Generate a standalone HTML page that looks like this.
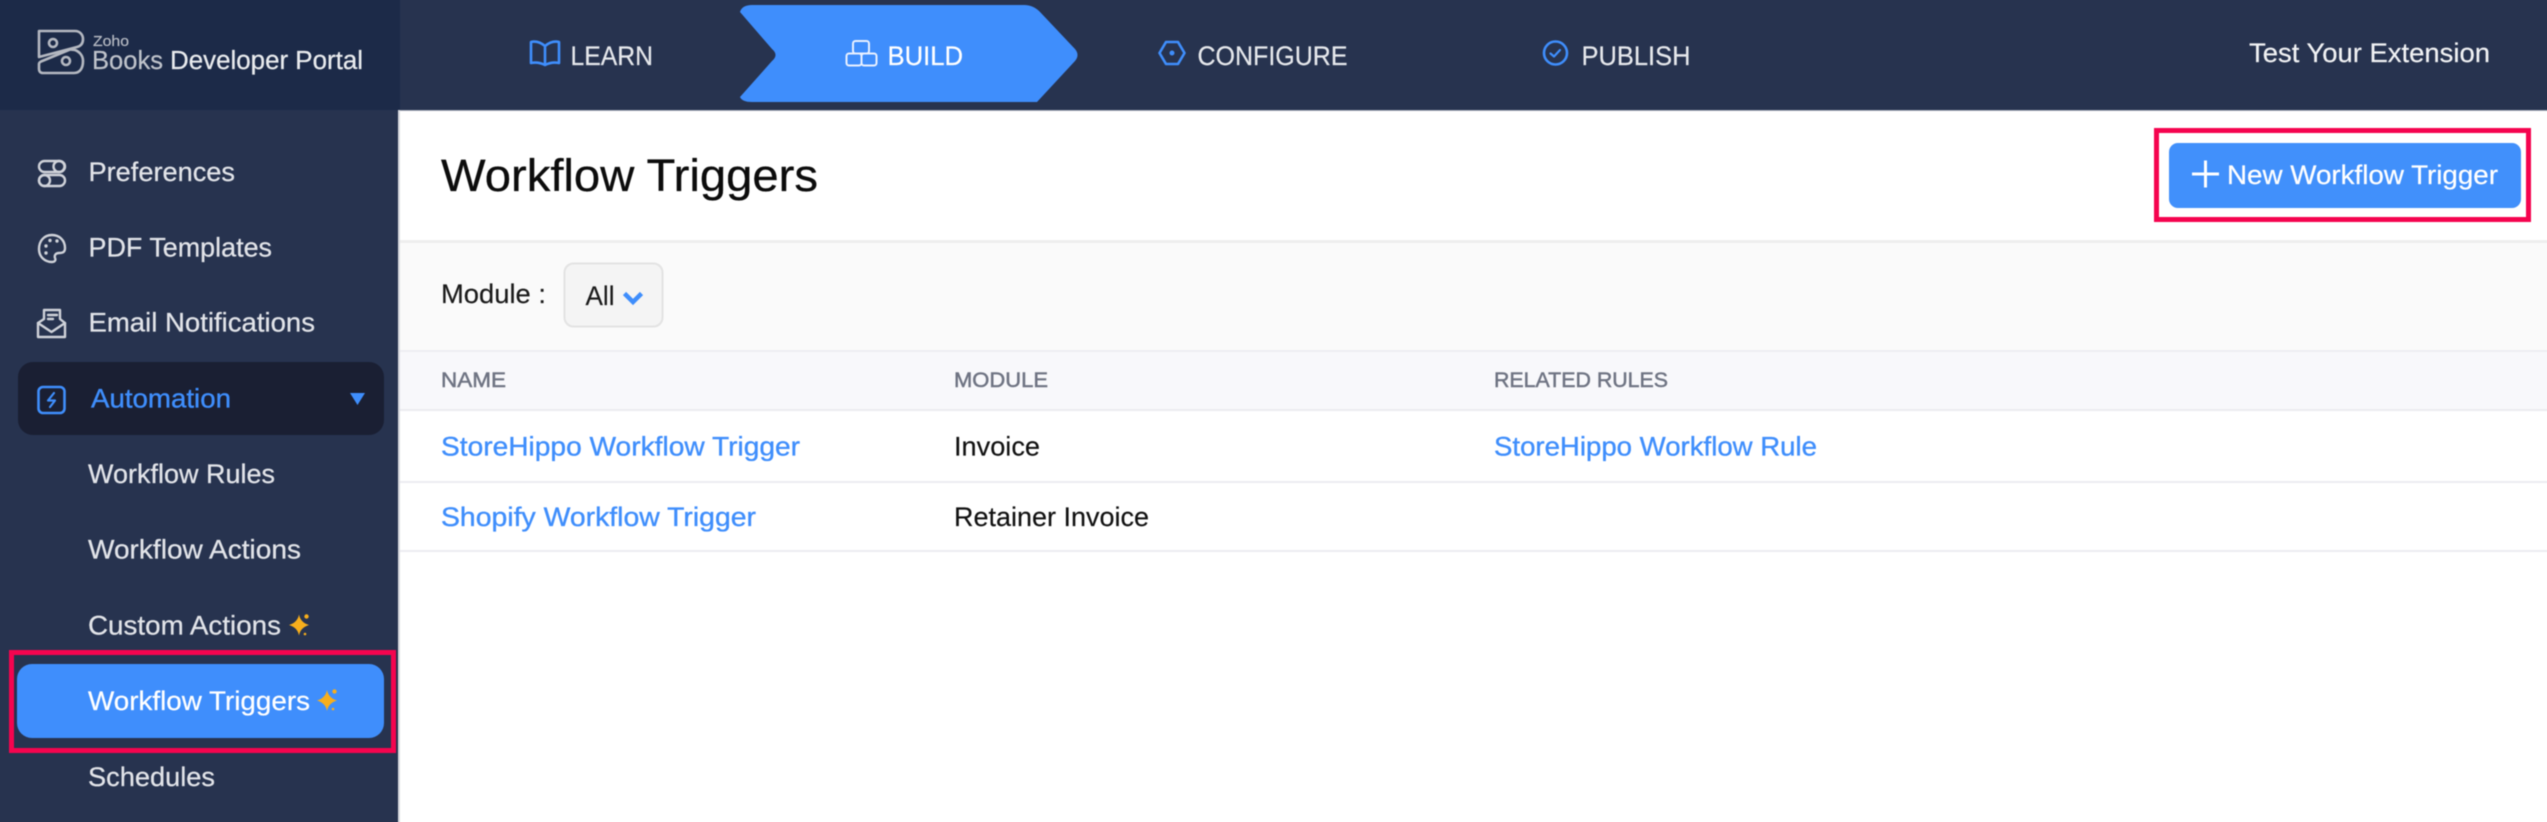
<!DOCTYPE html>
<html lang="en">
<head>
<meta charset="utf-8">
<title>Workflow Triggers</title>
<style>
html,body{margin:0;padding:0;width:2547px;height:822px;overflow:hidden;background:#fff}
.wrap{position:absolute;left:0;top:0;width:2547px;height:822px;overflow:hidden}
svg{display:block;position:absolute;left:-10px;top:-10px;filter:blur(.5px)}
text{font-family:"Liberation Sans",sans-serif;font-size:27px}
.nav{fill:#e6e8ec;stroke:#e6e8ec;stroke-width:.2}
.side{fill:#e2e4e9;stroke:#e2e4e9;stroke-width:.25}
.wt{fill:#fff;stroke:#fff;stroke-width:.25}
.link{fill:#3f8efc;stroke:#3f8efc;stroke-width:.35}
.th{fill:#6f7483;font-size:21.500px;stroke:#6f7483;stroke-width:.5}
.td{fill:#111;stroke:#111;stroke-width:.15}
.g{fill:none;stroke:#cfd2d9;stroke-width:2.4;stroke-linecap:round;stroke-linejoin:round}
.b{fill:none;stroke:#3f8efc;stroke-width:2.6;stroke-linecap:round;stroke-linejoin:round}
.w{fill:none;stroke:#e8f0ff;stroke-width:2;stroke-linejoin:round}
</style>
</head>
<body>
<div class="wrap">
<svg width="2567" height="842" viewBox="-10 -10 2567 842" xmlns="http://www.w3.org/2000/svg">
  <!-- backgrounds -->
  <rect x="-10" y="-10" width="2567" height="842" fill="#fff"/>
  <rect x="-10" y="-10" width="2567" height="120" fill="#27334f"/>
  <rect x="-10" y="-10" width="410" height="120" fill="#1c2a48"/>
  <rect x="-10" y="110" width="408" height="722" fill="#27334f"/>
  <rect x="398" y="110" width="2" height="722" fill="#d9dbe0"/>
  <rect x="400" y="110" width="2157" height="1" fill="#aab0bc"/>

  <!-- logo -->
  <g fill="none" stroke="#b4b8c1" stroke-width="2.600" stroke-linejoin="round">
    <path d="M39 31H75C80 31 83 35 83 39C83 43 81 46 77 47L39 57Z"/>
    <path d="M41 61.500L70 49.500L75 50C80 52 83 56 83 61C83 68 80 73 74 73H43C40 73 39 71 39 69V64C39 63 40 62 41 61.500Z"/>
    <circle cx="53" cy="43" r="4"/>
    <circle cx="66" cy="61" r="4"/>
  </g>
  <text x="93" y="46" fill="#b6bac3" style="font-size:14.500px" stroke="#b6bac3" stroke-width=".2" textLength="36" lengthAdjust="spacingAndGlyphs">Zoho</text>
  <text x="92" y="69" fill="#bfc3cb" stroke="#bfc3cb" stroke-width=".2" style="font-size:26px" textLength="71" lengthAdjust="spacingAndGlyphs">Books</text>
  <text x="170" y="69" fill="#e9ebee" stroke="#e9ebee" stroke-width=".25" style="font-size:25.500px" textLength="193" lengthAdjust="spacingAndGlyphs">Developer Portal</text>

  <!-- top nav -->
  <path d="M752 5H1024Q1034 5 1041 13L1075 49Q1080 55 1075 61L1037 102H752Q742 102 740 97L772 61Q779 55 772 49L740 12Q742 5 752 5Z" fill="#3f8efc"/>

  <g class="b">
    <path d="M545 46C540 42 535 41 531 42V63C536 62 541 63 545 65C549 63 554 62 559 63V42C555 41 550 42 545 46ZM545 46V65"/>
  </g>
  <text class="nav" x="570.500" y="65" textLength="82.500" lengthAdjust="spacingAndGlyphs">LEARN</text>

  <g class="w">
    <rect x="853" y="41" width="16" height="12.500" rx="2.500"/>
    <rect x="846.500" y="53.500" width="15" height="12" rx="2.500"/>
    <rect x="861.500" y="53.500" width="15" height="12" rx="2.500"/>
  </g>
  <text class="wt" x="887.500" y="65" textLength="75.500" lengthAdjust="spacingAndGlyphs">BUILD</text>

  <path class="b" d="M1166 42H1178L1184.500 53L1178 64H1166L1159.500 53Z"/>
  <circle cx="1172" cy="53" r="2.500" fill="#3f8efc"/>
  <text class="nav" x="1197.500" y="65" textLength="150" lengthAdjust="spacingAndGlyphs">CONFIGURE</text>

  <circle class="b" cx="1555.500" cy="53" r="11.500"/>
  <path class="b" style="stroke-width:2.200" d="M1550.500 53.500L1554 56.500L1560 50"/>
  <text class="nav" x="1581.500" y="65" textLength="109" lengthAdjust="spacingAndGlyphs">PUBLISH</text>

  <text class="nav" style="fill:#f1f2f4;stroke:#f1f2f4" x="2249" y="62" textLength="241" lengthAdjust="spacingAndGlyphs">Test Your Extension</text>

  <!-- sidebar -->
  <g class="g">
    <rect x="39" y="161" width="26" height="11" rx="5.500"/>
    <circle cx="59" cy="166.500" r="5.500"/>
    <rect x="39" y="175" width="26" height="11" rx="5.500"/>
    <circle cx="44.500" cy="180.500" r="5.500"/>
  </g>
  <text class="side" x="88.500" y="181" textLength="146.500" lengthAdjust="spacingAndGlyphs">Preferences</text>

  <path class="g" d="M52 235C44 235 39 241 39 249C39 257 45 262 52 262C55 262 56 260 55 258C54 255 56 253 59 253C63 253 65 252 65 248C65 240 59 235 52 235Z"/>
  <g fill="#cfd2d9"><circle cx="46" cy="246" r="1.700"/><circle cx="50" cy="240.500" r="1.700"/><circle cx="57" cy="241" r="1.700"/><circle cx="46" cy="253" r="1.700"/></g>
  <text class="side" x="88.500" y="256.500" textLength="183.500" lengthAdjust="spacingAndGlyphs">PDF Templates</text>

  <g class="g">
    <path d="M38 323V337H65V323L60 319V310H44V319Z"/>
    <path d="M38 323L51.500 332L65 323"/>
    <path d="M48 315H57M48 319H53"/>
  </g>
  <text class="side" x="88.500" y="331.500" textLength="226.500" lengthAdjust="spacingAndGlyphs">Email Notifications</text>

  <rect x="18" y="362" width="366" height="73" rx="15" fill="#1a1f33"/>
  <rect class="b" x="38.500" y="387" width="26" height="26" rx="4.500"/>
  <path class="b" style="stroke-width:2.200" d="M54 393L48 400.500H55L50 407"/>
  <text class="link" x="91" y="407.500" textLength="140" lengthAdjust="spacingAndGlyphs">Automation</text>
  <path d="M350 393H365L357.500 405Z" fill="#3f8efc"/>

  <text class="side" x="88" y="483" textLength="187" lengthAdjust="spacingAndGlyphs">Workflow Rules</text>
  <text class="side" x="88" y="558.500" textLength="213" lengthAdjust="spacingAndGlyphs">Workflow Actions</text>
  <text class="side" x="88" y="634.500" textLength="193" lengthAdjust="spacingAndGlyphs">Custom Actions</text>
  <g fill="#f7ae1c">
    <path d="M299 614.500Q300.500 622.500 309 625Q300.500 627.500 299 635.500Q297.500 627.500 289 625Q297.500 622.500 299 614.500Z"/>
    <circle cx="306.500" cy="616.500" r="2.200"/><circle cx="305" cy="634" r="1.300"/>
  </g>

  <rect x="17" y="664" width="367" height="74" rx="15" fill="#3f8efc"/>
  <rect x="11.500" y="652.500" width="382" height="98" fill="none" stroke="#f5044f" stroke-width="5"/>
  <text class="wt" x="88" y="710" textLength="222" lengthAdjust="spacingAndGlyphs">Workflow Triggers</text>
  <g fill="#f7ae1c">
    <path d="M327 690Q328.500 698 337 700.500Q328.500 703 327 711Q325.500 703 317 700.500Q325.500 698 327 690Z"/>
    <circle cx="334.500" cy="691.500" r="2.200"/><circle cx="333" cy="709" r="1.300"/>
  </g>

  <text class="side" x="88" y="786" textLength="127" lengthAdjust="spacingAndGlyphs">Schedules</text>

  <!-- title -->
  <text x="441" y="191" fill="#0c0c0c" stroke="#0c0c0c" stroke-width=".3" style="font-size:45px" textLength="377" lengthAdjust="spacingAndGlyphs">Workflow Triggers</text>

  <!-- new button -->
  <rect x="2156.500" y="130.500" width="372" height="89" fill="none" stroke="#f5044f" stroke-width="5"/>
  <rect x="2169" y="143" width="352" height="65" rx="9" fill="#4190fb"/>
  <path d="M2192 174H2219M2205.500 160.500V187.500" fill="none" stroke="#fff" stroke-width="3"/>
  <text class="wt" x="2227" y="184" textLength="271" lengthAdjust="spacingAndGlyphs">New Workflow Trigger</text>

  <!-- filter bar -->
  <rect x="400" y="240" width="2157" height="3" fill="#eeeeee"/>
  <rect x="400" y="243" width="2157" height="107" fill="#fafafa"/>
  <text x="441" y="303" fill="#1a1a1a" stroke="#1a1a1a" stroke-width=".15" textLength="105" lengthAdjust="spacingAndGlyphs">Module :</text>
  <rect x="564.500" y="263.500" width="98" height="63" rx="9" fill="#f4f4f4" stroke="#e3e3e3" stroke-width="2"/>
  <text x="585.500" y="305" fill="#1a1a1a" stroke="#1a1a1a" stroke-width=".15" textLength="29" lengthAdjust="spacingAndGlyphs">All</text>
  <path d="M624.500 293.500L633 302L641.500 293.500" fill="none" stroke="#3f8efc" stroke-width="4.500"/>

  <!-- table -->
  <rect x="400" y="350" width="2157" height="60" fill="#f8f8fb"/>
  <rect x="400" y="350" width="2157" height="2" fill="#eeeef2"/>
  <rect x="400" y="409" width="2157" height="2" fill="#ebebf0"/>
  <text class="th" x="441" y="387" textLength="65" lengthAdjust="spacingAndGlyphs">NAME</text>
  <text class="th" x="954" y="387" textLength="94" lengthAdjust="spacingAndGlyphs">MODULE</text>
  <text class="th" x="1494" y="387" textLength="174" lengthAdjust="spacingAndGlyphs">RELATED RULES</text>

  <text class="link" x="441" y="455.500" textLength="359" lengthAdjust="spacingAndGlyphs">StoreHippo Workflow Trigger</text>
  <text class="td" x="954" y="455.500" textLength="86" lengthAdjust="spacingAndGlyphs">Invoice</text>
  <text class="link" x="1494" y="455.500" textLength="323" lengthAdjust="spacingAndGlyphs">StoreHippo Workflow Rule</text>
  <rect x="400" y="481" width="2157" height="2" fill="#ededf2"/>

  <text class="link" x="441" y="526" textLength="315" lengthAdjust="spacingAndGlyphs">Shopify Workflow Trigger</text>
  <text class="td" x="954" y="526" textLength="195" lengthAdjust="spacingAndGlyphs">Retainer Invoice</text>
  <rect x="400" y="550" width="2157" height="2" fill="#ededf2"/>
</svg>
</div>
</body>
</html>
